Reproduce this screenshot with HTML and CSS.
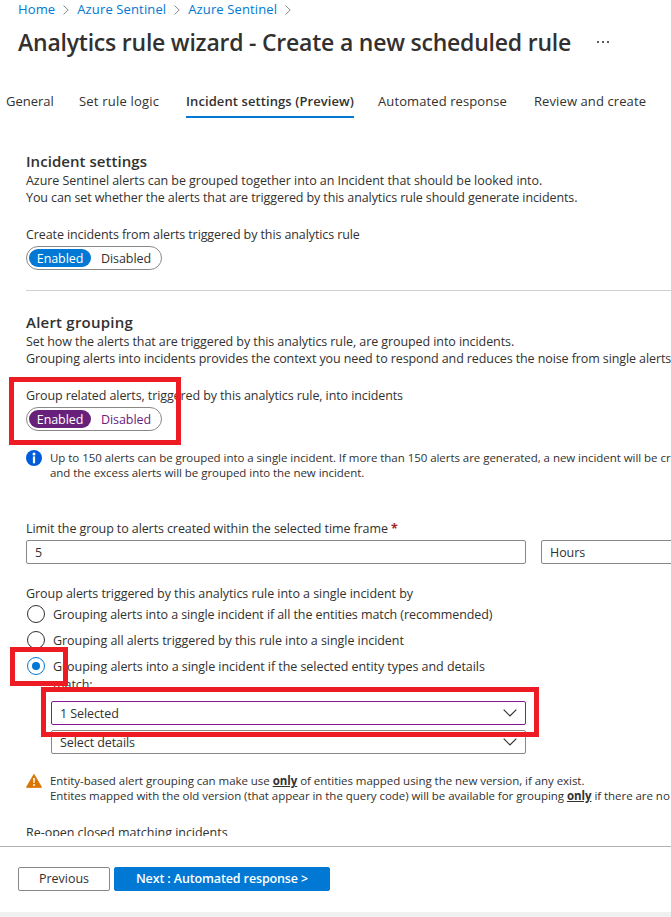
FILE: index.html
```
<!DOCTYPE html>
<html lang="en">
<head>
<meta charset="utf-8">
<title>Analytics rule wizard</title>
<link rel="stylesheet" href="styles.css">
</head>
<body>
<div class="page">
  <nav class="crumbs">
    <a>Home</a>
    <svg class="sep" viewBox="0 0 6 10"><path d="M0.5 0.5L5.2 5L0.5 9.5"/></svg>
    <a>Azure Sentinel</a>
    <svg class="sep" viewBox="0 0 6 10"><path d="M0.5 0.5L5.2 5L0.5 9.5"/></svg>
    <a>Azure Sentinel</a>
    <svg class="sep" viewBox="0 0 6 10"><path d="M0.5 0.5L5.2 5L0.5 9.5"/></svg>
  </nav>
  <header class="title">
    <h1>Analytics rule wizard - Create a new scheduled rule</h1>
    <span class="more"><i></i><i></i><i></i></span>
  </header>
  <div class="tabs">
    <span class="tab general">General</span>
    <span class="tab logic">Set rule logic</span>
    <span class="tab active">Incident settings (Preview)</span>
    <span class="tab response">Automated response</span>
    <span class="tab review">Review and create</span>
  </div>
  <main class="content">
    <section class="incidents">
      <h2>Incident settings</h2>
      <p class="fit">Azure Sentinel alerts can be grouped together into an Incident that should be looked into.</p>
      <p class="snug">You can set whether the alerts that are triggered by this analytics rule should generate incidents.</p>
      <p class="label snug">Create incidents from alerts triggered by this analytics rule</p>
      <div class="toggle"><span class="on">Enabled</span><span class="off">Disabled</span></div>
    </section>
    <section class="grouping">
      <h2 class="wide">Alert grouping</h2>
      <p>Set how the alerts that are triggered by this analytics rule, are grouped into incidents.</p>
      <p class="snug">Grouping alerts into incidents provides the context you need to respond and reduces the noise from single alerts</p>
      <p class="label snug">Group related alerts, triggered by this analytics rule, into incidents</p>
      <div class="toggle visited"><span class="on">Enabled</span><span class="off">Disabled</span></div>
      <div class="note info">
        <svg class="note-icon" viewBox="0 0 16 16"><circle cx="8" cy="8" r="8" fill="#015cda"/><circle cx="8" cy="3.9" r="1.5" fill="#fff"/><path d="M6.9 6.4h2.2v6.9H6.9z" fill="#fff"/></svg>
        <div>Up to 150 alerts can be grouped into a single incident. If more than 150 alerts are generated, a new incident will be cr<br>and the excess alerts will be grouped into the new incident.</div>
      </div>
      <p class="limit snug">Limit the group to alerts created within the selected time frame <b class="star">*</b></p>
      <div class="fields">
        <div class="box">5</div>
        <div class="box hours">Hours</div>
      </div>
      <p class="by">Group alerts triggered by this analytics rule into a single incident by</p>
      <div class="radio"><span class="dot"></span><span>Grouping alerts into a single incident if all the entities match (recommended)</span></div>
      <div class="radio"><span class="dot"></span><span class="fit">Grouping all alerts triggered by this rule into a single incident</span></div>
      <div class="radio last"><span class="dot checked"></span><span class="fit">Grouping alerts into a single incident if the selected entity types and details<br>match:</span></div>
      <div class="selects">
        <div class="box chosen">1 Selected<svg class="chev" viewBox="0 0 14 8"><path d="M0.7 0.7L7 7L13.3 0.7"/></svg></div>
        <div class="box">Select details<svg class="chev" viewBox="0 0 14 8"><path d="M0.7 0.7L7 7L13.3 0.7"/></svg></div>
      </div>
      <div class="note warn">
        <svg class="note-icon" viewBox="0 0 16 16"><path d="M8 1.4L15.5 14.3H0.5z" fill="#db7500" stroke="#db7500" stroke-linejoin="round"/><path d="M7.1 5h1.8l-.3 5H7.4z" fill="#fff"/><circle cx="8" cy="11.9" r="1" fill="#fff"/></svg>
        <div>Entity-based alert grouping can make use <b>only</b> of entities mapped using the new version, if any exist.<br>Entites mapped with the old version (that appear in the query code) will be available for grouping <b>only</b> if there are no</div>
      </div>
      <p class="reopen fit">Re-open closed matching incidents</p>
    </section>
  </main>
  <footer class="footer">
    <button class="btn">Previous</button>
    <button class="btn primary">Next : Automated response &gt;</button>
  </footer>
  <div class="mark mark-toggle"></div>
  <div class="mark mark-radio"></div>
  <div class="mark mark-select"></div>
</div>
</body>
</html>
```
FILE: styles.css
```
* { box-sizing: border-box; }
body {
  margin: 0;
  background: #fff;
  color: #323130;
  font: 12.5px/17px "Open Sans", sans-serif;
  letter-spacing: -0.08px;
}
h1, h2, p { margin: 0; }
.page {
  position: relative;
  display: flex;
  flex-direction: column;
  width: 671px;
  height: 917px;
  overflow: hidden;
  white-space: nowrap;
  border-bottom: 5px solid #f0f0f0;
}
.fit { letter-spacing: -0.055px; }
.snug { letter-spacing: -0.1px; }

.crumbs {
  flex: none;
  display: flex;
  align-items: center;
  height: 19px;
  padding-left: 18px;
  color: #0078d4;
  font-size: 13px;
  letter-spacing: 0.13px;
}
.sep { width: 6px; height: 10px; margin: 0 8px; fill: none; stroke: #8a8886; }
.title { flex: none; display: flex; align-items: center; height: 45px; padding-left: 18px; }
h1 {
  width: 585px;
  font-size: 23px;
  line-height: 32px;
  font-weight: 600;
  letter-spacing: -0.219px;
}
.more { display: flex; gap: 3px; margin: 1px 0 0 -6px; }
.more i { width: 2px; height: 2px; background: #605e5c; }

.tabs { flex: none; display: flex; height: 54px; padding: 26px 0 0 6px; font-size: 13px; letter-spacing: 0.1px; }
.tab { height: 28px; line-height: 22px; }
.general { width: 73px; letter-spacing: 0; }
.logic { width: 107px; letter-spacing: 0.2px; }
.active { width: 168px; font-weight: 600; border-bottom: 2px solid #0078d4; letter-spacing: 0.09px; }
.response { width: 156px; margin-left: 24px; }

.content { flex: none; height: 718px; padding: 33px 0 0 26px; overflow: hidden; }
h2 { margin-bottom: 1px; font-size: 15px; line-height: 20px; font-weight: 600; letter-spacing: 0.046px; }
.wide { letter-spacing: 0.22px; }
.label { margin-top: 20px; }
.incidents { height: 140px; border-bottom: 1px solid #d2d0ce; }
.grouping { padding-top: 21px; }
.toggle {
  display: flex;
  width: 136px;
  height: 24px;
  margin-top: 3px;
  padding: 2px;
  border: 1px solid #8a8886;
  border-radius: 12px;
  line-height: 19px;
}
.on { width: 62px; height: 18px; border-radius: 9px; background: #0078d4; color: #fff; text-align: center; }
.off { margin-left: 10px; }
.visited .on { background: #68217a; }
.visited .off { color: #68217a; }

.note { display: flex; gap: 8px; font-size: 11.5px; line-height: 15px; letter-spacing: -0.045px; }
.note-icon { flex: none; width: 16px; height: 16px; }
.note b { text-decoration: underline; }
.info { margin-top: 19px; }
.limit { margin-top: 40px; }
.star { color: #a4262c; }
.fields { display: flex; gap: 15px; margin-top: 3px; }
.box {
  flex: none;
  display: flex;
  align-items: center;
  justify-content: space-between;
  width: 500px;
  height: 24px;
  padding: 0 8px;
  border: 1px solid #8a8886;
  border-radius: 2px;
}
.hours { width: 200px; }
.by { margin-top: 21px; letter-spacing: -0.06px; }
.radio { display: flex; gap: 8px; height: 18px; margin: 3px 0 8px 1px; }
.radio + .radio { margin-top: 8px; }
.dot { flex: none; width: 18px; height: 18px; border: 1px solid #323130; border-radius: 50%; }
.checked {
  display: grid;
  place-items: center;
  border-color: #0078d4;
}
.checked::after { content: ""; width: 8px; height: 8px; border-radius: 50%; background: #0078d4; }
.radio span:last-child { padding-top: 1px; }
.radio.last { height: 36px; margin-bottom: 0; line-height: 18px; }
.selects { display: grid; gap: 5px; width: 475px; margin: 8px 0 0 25px; }
.selects .box { width: 475px; }
.chosen { border-color: #881798; }
.chev { width: 14px; height: 8px; fill: none; stroke: #323130; stroke-width: 1.2; }
.warn { margin-top: 19px; }
.reopen { margin-top: 21px; letter-spacing: -0.03px; }

.footer { flex: none; display: flex; gap: 4px; height: 66px; margin-top: 10px; padding: 20px 0 0 18px; border-top: 1px solid #b3b0ad; }
.btn {
  width: 92px;
  height: 24px;
  padding: 0;
  border: 1px solid #8a8886;
  border-radius: 2px;
  background: #fff;
  color: #323130;
  font: 12.5px/20px "Open Sans", sans-serif;
}
.primary { width: 216px; border-color: #0078d4; background: #0078d4; color: #fff; font-weight: 600; letter-spacing: -0.13px; }

/* Highlight frames drawn over the form */
.mark { position: absolute; border: 5px solid #ed1c24; }
.mark-toggle { left: 9px; top: 377px; width: 172px; height: 68px; }
.mark-radio { left: 10px; top: 647px; width: 58px; height: 39px; }
.mark-select { left: 41px; top: 687px; width: 498px; height: 50px; }
```
